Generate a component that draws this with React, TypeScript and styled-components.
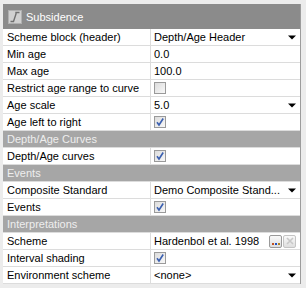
import React from "react";
import styled, { createGlobalStyle } from "styled-components";

const Global = createGlobalStyle`
  html, body { margin: 0; padding: 0; background: #ececec; }
  body { font-family: "Liberation Sans", Arial, sans-serif; }
`;

const Frame = styled.div`
  width: 306px;
  height: 288px;
  box-sizing: border-box;
  padding: 4px 5px 4px 3px;
  background: #ececec;
`;

const Panel = styled.div`
  display: flex;
  flex-direction: column;
  border-right: 1px solid #9c9c9c;
  background: #ffffff;
`;

const TitleBar = styled.div`
  height: 25px;
  display: flex;
  align-items: center;
  gap: 4px;
  padding-left: 5px;
  background: #8b8b8b;
  color: #ffffff;
  font-size: 11px;
  font-family: "Liberation Sans", Arial, sans-serif;
`;

const IconBox = styled.div`
  width: 14px;
  height: 14px;
  display: flex;
  background: #d0d0d0;
  border: 1px solid #b0b0b0;
  box-sizing: border-box;
`;

const Row = styled.div`
  display: grid;
  grid-template-columns: 148px 1fr;
  height: 17px;
  box-sizing: border-box;
  border-bottom: 1px solid #dcdcdc;
  font-size: 11px;
  font-family: "Liberation Sans", Arial, sans-serif;
  color: #000;
`;

const Label = styled.div`
  display: flex;
  align-items: center;
  padding-left: 4px;
  border-right: 1px solid #dcdcdc;
  white-space: nowrap;
  overflow: hidden;
`;

const Value = styled.div`
  display: flex;
  align-items: center;
  padding-left: 3px;
  padding-right: 4px;
  gap: 4px;
  white-space: nowrap;
  overflow: hidden;
`;

const ValueText = styled.span`
  flex: 1;
  overflow: hidden;
`;

const Section = styled.div`
  height: 17px;
  box-sizing: border-box;
  display: flex;
  align-items: center;
  padding-left: 4px;
  background: #a6a6a6;
  color: #eeeeee;
  font-size: 11px;
  font-family: "Liberation Sans", Arial, sans-serif;
  border-bottom: 1px solid #dcdcdc;
`;

const Check = styled.div<{ $checked?: boolean }>`
  width: 12px;
  height: 12px;
  box-sizing: border-box;
  border: 1px solid #9a9a9a;
  background: linear-gradient(135deg, #dcdcdc, #f8f8f8);
  display: flex;
  align-items: center;
  justify-content: center;
`;

const SmallButton = styled.div<{ $disabled?: boolean }>`
  width: 13px;
  height: 13px;
  box-sizing: border-box;
  border: 1px solid ${(p) => (p.$disabled ? "#c4c4c4" : "#9a9a9a")};
  border-radius: 2px;
  background: linear-gradient(#fafafa, #dedede);
  display: flex;
  align-items: ${(p) => (p.$disabled ? "center" : "flex-end")};
  justify-content: center;
  padding-bottom: ${(p) => (p.$disabled ? "0" : "2px")};
`;

const Buttons = styled.div`
  display: flex;
  gap: 1px;
`;

const Arrow = () => (
  <svg width="8" height="5" viewBox="0 0 8 5">
    <path d="M0 0.5H8L4 4.5Z" fill="#000" />
  </svg>
);

const Tick = () => (
  <svg width="10" height="10" viewBox="0 0 10 10">
    <path d="M2 5.2L4 8L8.2 1.5" fill="none" stroke="#3a5fb0" strokeWidth="1.6" />
  </svg>
);

const Box = ({ checked }: { checked?: boolean }) => (
  <Check $checked={checked}>{checked && <Tick />}</Check>
);

type Item =
  | { kind: "section"; label: string }
  | { kind: "text"; label: string; value: string; dropdown?: boolean }
  | { kind: "check"; label: string; checked: boolean }
  | { kind: "scheme"; label: string; value: string };

const items: Item[] = [
  { kind: "text", label: "Scheme block (header)", value: "Depth/Age Header", dropdown: true },
  { kind: "text", label: "Min age", value: "0.0" },
  { kind: "text", label: "Max age", value: "100.0" },
  { kind: "check", label: "Restrict age range to curve", checked: false },
  { kind: "text", label: "Age scale", value: "5.0", dropdown: true },
  { kind: "check", label: "Age left to right", checked: true },
  { kind: "section", label: "Depth/Age Curves" },
  { kind: "check", label: "Depth/Age curves", checked: true },
  { kind: "section", label: "Events" },
  { kind: "text", label: "Composite Standard", value: "Demo Composite Stand...", dropdown: true },
  { kind: "check", label: "Events", checked: true },
  { kind: "section", label: "Interpretations" },
  { kind: "scheme", label: "Scheme", value: "Hardenbol et al. 1998" },
  { kind: "check", label: "Interval shading", checked: true },
  { kind: "text", label: "Environment scheme", value: "<none>", dropdown: true },
];

export default function App() {
  return (
    <>
      <Global />
      <Frame>
        <Panel>
          <TitleBar>
            <IconBox>
              <svg width="12" height="12" viewBox="0 0 12 12">
                <path d="M1.5 10.5H4.5L7 3V1.5H10.5" fill="none" stroke="#707070" strokeWidth="1.4" />
              </svg>
            </IconBox>
            Subsidence
          </TitleBar>
          {items.map((it, i) => {
            if (it.kind === "section") return <Section key={i}>{it.label}</Section>;
            return (
              <Row key={i}>
                <Label>{it.label}</Label>
                <Value>
                  {it.kind === "text" && (
                    <>
                      <ValueText>{it.value}</ValueText>
                      {it.dropdown && <Arrow />}
                    </>
                  )}
                  {it.kind === "check" && <Box checked={it.checked} />}
                  {it.kind === "scheme" && (
                    <>
                      <ValueText>{it.value}</ValueText>
                      <Buttons>
                        <SmallButton>
                          <svg width="8" height="2" viewBox="0 0 8 2">
                            <rect x="0" y="0" width="2" height="2" fill="#c05020" />
                            <rect x="3" y="0" width="2" height="2" fill="#2050c0" />
                            <rect x="6" y="0" width="2" height="2" fill="#b08020" />
                          </svg>
                        </SmallButton>
                        <SmallButton $disabled>
                          <svg width="8" height="8" viewBox="0 0 8 8">
                            <path d="M1 1L7 7M7 1L1 7" stroke="#c8c8c8" strokeWidth="1.6" />
                          </svg>
                        </SmallButton>
                      </Buttons>
                    </>
                  )}
                </Value>
              </Row>
            );
          })}
        </Panel>
      </Frame>
    </>
  );
}
